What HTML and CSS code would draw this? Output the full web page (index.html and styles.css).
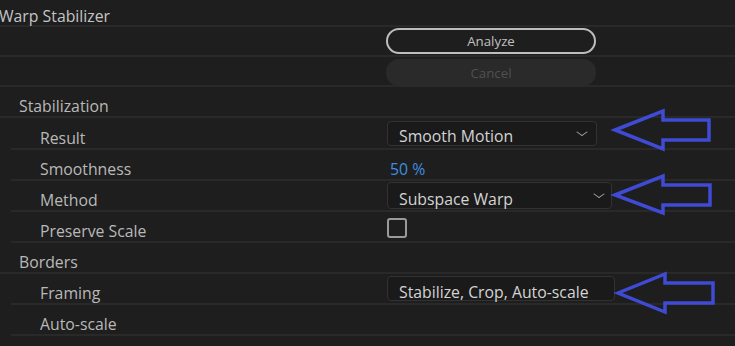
FILE: index.html
```html
<!DOCTYPE html>
<html lang="en">
<head>
    <meta charset="UTF-8">
    <title>Warp Stabilizer</title>
    <link rel="stylesheet" href="styles.css">
</head>
<body>
    <div class="panel">
        <div class="row top h27"><span class="label">Warp Stabilizer</span></div>
        <div class="row top h30">
            <span class="label"></span>
            <button class="btn analyze">Analyze</button>
        </div>
        <div class="row top h30">
            <span class="label"></span>
            <button class="btn cancel">Cancel</button>
        </div>
        <div class="row group h31"><span class="label">Stabilization</span></div>
        <div class="row sub h32">
            <span class="label">Result</span>
            <div class="select w210">Smooth Motion<span class="chev"></span></div>
        </div>
        <div class="row sub"><span class="label">Smoothness</span><span class="value">50 %</span></div>
        <div class="row sub">
            <span class="label">Method</span>
            <div class="select w223">Subspace Warp<span class="chev"></span></div>
        </div>
        <div class="row sub"><span class="label">Preserve Scale</span><span class="checkbox"></span></div>
        <div class="row group"><span class="label">Borders</span></div>
        <div class="row sub">
            <span class="label">Framing</span>
            <div class="select w226">Stabilize, Crop, Auto-scale</div>
        </div>
        <div class="row sub"><span class="label">Auto-scale</span></div>
        <div class="row group"><span class="label">T</span></div>

        <!-- annotation arrows drawn over the panel -->
        <svg class="arrows" width="735" height="346" viewBox="0 0 735 346">
            <polygon points="615,130 663,111 663,120 709,120 709,140 663,140 663,149"/>
            <polygon points="615,195 663,176 663,185 710,185 710,205 663,205 663,213"/>
            <polygon points="618,293 665,274 665,283 713,283 713,303 665,303 665,312"/>
        </svg>
    </div>
</body>
</html>
```

FILE: styles.css
```css
* {
    box-sizing: border-box;
    margin: 0;
    padding: 0;
}
body {
    background: #1e1e1e;
    font-family: 'Open Sans', 'Noto Sans', sans-serif;
    color: #b9b9b9;
    width: 735px;
    height: 346px;
    overflow: hidden;
}
.panel {
    position: relative;
    height: 346px;
    overflow: hidden;
}
.row {
    display: flex;
    align-items: center;
    height: 31px;
    border-bottom: 2px solid #292929;
    font-size: 15.8px;
}
.h27 { height: 27px; }
.h30 { height: 30px; }
.h31 { height: 31px; }
.h32 { height: 32px; }
.row.top .label {
    width: 387px;
    margin-left: -1px;
    color: #c4c4c4;
    padding-top: 6px;
}
.row.group {
    padding-left: 19px;
}
.row.group .label {
    width: 368px;
}
.row.sub {
    margin-left: 11px;
    padding-left: 29px;
}
.row.sub .label {
    width: 347px;
}
.label {
    flex-shrink: 0;
    padding-top: 9px;
}
.btn {
    width: 210px;
    height: 26px;
    border-radius: 13px;
    font-family: inherit;
    font-size: 13.3px;
}
.btn.analyze {
    background: transparent;
    border: 2px solid #bdbdbd;
    color: #c0c0c0;
}
.btn.cancel {
    background: #2a2a2a;
    border: none;
    height: 27px;
    color: #505050;
    margin-top: 3px;
}
.select {
    position: relative;
    height: 25px;
    background: #1a1a1a;
    border: 1px solid #323232;
    border-radius: 4px;
    padding: 2px 0 0 11px;
    line-height: 24px;
    font-size: 15.8px;
    color: #d4d4d4;
}
.w210 { width: 210px; }
.w223 { width: 225px; height: 27px; line-height: 26px; padding-top: 3px; }
.w226 { width: 228px; padding-top: 3px; }
.chev {
    position: absolute;
    right: 10px;
    top: 6px;
    width: 8px;
    height: 8px;
    border-right: 1px solid #aaa;
    border-bottom: 1px solid #aaa;
    transform: scaleY(0.7) rotate(45deg);
}
.w223 .chev {
    right: 8px;
    top: 7px;
}
.value {
    color: #3d8ee0;
    font-size: 15.8px;
    margin-left: 3px;
    padding-top: 9px;
}
.checkbox {
    width: 20px;
    height: 20px;
    border: 2px solid #9a9a9a;
    border-radius: 3px;
    margin-top: 3px;
}
.arrows {
    position: absolute;
    left: 0;
    top: 0;
    pointer-events: none;
}
.arrows polygon {
    fill: none;
    stroke: #3f4bd4;
    stroke-width: 3.5;
    stroke-linejoin: miter;
}
```
